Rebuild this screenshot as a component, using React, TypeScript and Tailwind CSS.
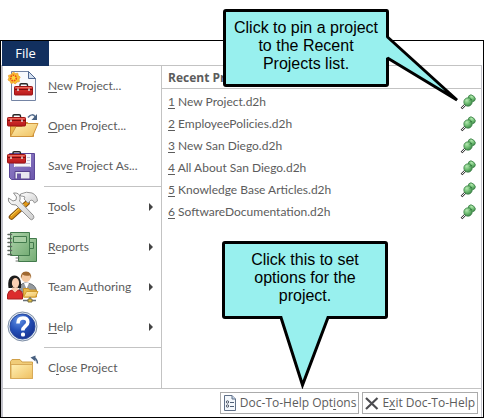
import React from 'react';

type IconProps = { className?: string };

const Toolbox = ({ x = 0, y = 0 }: { x?: number; y?: number }) => (
  <g transform={`translate(${x} ${y})`}>
    <path d="M6 3.500V2Q6 .8 7.200.8h5Q13.500.8 13.500 2v1.500" fill="none" stroke="#282828" strokeWidth="1.400" />
    <rect x="0.500" y="3.500" width="18" height="8.500" rx="0.800" fill="url(#red)" stroke="#9c1414" />
    <path d="M1 6.500h17.500" stroke="#7c0c0c" />
    <path d="M1.500 4.500h16" stroke="#ec6c5c" />
    <path d="M4 5.500v2.500M15 5.500v2.500" stroke="#e8e8e8" strokeWidth="1.400" />
  </g>
);

const Defs = () => (
  <svg className="absolute h-0 w-0" aria-hidden="true">
    <defs>
      <linearGradient id="red" x1="0" y1="0" x2="0" y2="1">
        <stop offset="0" stopColor="#dc3c34" />
        <stop offset="1" stopColor="#b8181c" />
      </linearGradient>
      <linearGradient id="gold" x1="0" y1="0" x2="1" y2="1">
        <stop offset="0" stopColor="#fff0b4" />
        <stop offset="1" stopColor="#efc060" />
      </linearGradient>
      <linearGradient id="purple" x1="0" y1="0" x2="1" y2="1">
        <stop offset="0" stopColor="#9380c8" />
        <stop offset="1" stopColor="#6c58ac" />
      </linearGradient>
      <linearGradient id="green" x1="0" y1="0" x2="1" y2="1">
        <stop offset="0" stopColor="#b0d4ac" />
        <stop offset="1" stopColor="#74ac74" />
      </linearGradient>
      <radialGradient id="blue" cx="0.350" cy="0.250" r="0.850">
        <stop offset="0" stopColor="#6090e4" />
        <stop offset="0.500" stopColor="#2450b8" />
        <stop offset="1" stopColor="#142c88" />
      </radialGradient>
      <linearGradient id="steel" x1="0" y1="0" x2="1" y2="1">
        <stop offset="0" stopColor="#ffffff" />
        <stop offset="1" stopColor="#d0d0d0" />
      </linearGradient>
      <radialGradient id="pin" cx="0.350" cy="0.300" r="0.800">
        <stop offset="0" stopColor="#b4e8b0" />
        <stop offset="0.500" stopColor="#6cbc70" />
        <stop offset="1" stopColor="#387c44" />
      </radialGradient>
    </defs>
  </svg>
);

const Icon = ({ children }: { children: React.ReactNode }) => (
  <svg viewBox="0 0 32 32" className="size-8 shrink-0" aria-hidden="true">
    {children}
  </svg>
);

const NewIcon = () => (
  <Icon>
    <path d="M4.500 1.500H21.500L28.500 8.500v22h-24z" fill="#f8fafd" stroke="#7484a4" />
    <path d="M21.500 1.500v7h7z" fill="#d4e0f0" stroke="#506890" />
    <path d="M6.500 2l1.800 1.600 2.500-.4.400 2.400 2 1.400-1.200 2 .4 2.600-2.500.4-1.600 2-1.800-1.200-2.500.6-.8-2.200-2.200-1.200 1-2.200-.6-2.400 2.400-.6z" fill="#f8c030" stroke="#f0a030" strokeWidth="0.800" />
    <circle cx="6.500" cy="8" r="2.800" fill="#fcd840" stroke="#ec4c18" strokeWidth="1.600" strokeDasharray="1.600 0.800" />
    <Toolbox x={7} y={13} />
  </Icon>
);

const OpenIcon = () => (
  <Icon>
    <path d="M3.500 26.500V12.500h17l2 2h4v12z" fill="#eab850" stroke="#c88830" />
    <path d="M3.500 26.500L9 16.500h6l3-3h13l-5.500 13z" fill="url(#gold)" stroke="#d0943c" />
    <Toolbox x={0} y={4} />
    <path d="M21 7.500q4-5 7.500-.5" fill="none" stroke="#587090" strokeWidth="1.500" />
    <path d="M30 4v6h-5.500z" fill="#486080" />
  </Icon>
);

const SaveIcon = () => (
  <Icon>
    <path d="M2.500 3.500h25v26H4.500l-2-2z" fill="url(#purple)" stroke="#5c4898" />
    <path d="M7 4h17v13H7z" fill="#f4f4f8" />
    <path d="M8 13.500h15M8 16.500h15M20 10.500h3M20 7.500h3" stroke="#c4c0d4" />
    <path d="M8 21.500h15V29H8z" fill="#e8e8f0" stroke="#56428c" />
    <path d="M10 23.500h4V29h-4z" fill="#6b56a6" />
    <Toolbox x={0} y={1} />
  </Icon>
);

const ToolsIcon = () => (
  <Icon>
    <path d="M4.500 26L20 12" stroke="#805010" strokeWidth="5.500" strokeLinecap="round" />
    <path d="M4.500 26L20 12" stroke="#e09818" strokeWidth="3.500" strokeLinecap="round" />
    <path d="M4 25L17 13" stroke="#ffdc60" strokeWidth="1" />
    <path d="M13.500 3q6-3 11.500-1 5 2 5.500 8l-3 2q-1-3-3.500-3l-3 3-4-4 1-2q-2-1-4.500-1z" fill="url(#steel)" stroke="#989898" />
    <path d="M6.500 2q6-.5 6.500 4 .5 2-.5 4l14 14.500q1 2-.5 3.500t-3 0L9 14q-5 .5-7-3-1-2-.5-4l4.500 3 3-1 .5-3z" fill="url(#steel)" stroke="#909090" />
  </Icon>
);

const ReportsIcon = () => (
  <Icon>
    <path d="M11.500 7.500h18v23h-18z" fill="url(#green)" stroke="#427a4c" />
    <path d="M18 11.500h8.500v6H18z" fill="none" stroke="#427a4c" />
    <path d="M3.500 1.500h19v23h-19z" fill="url(#green)" stroke="#427a4c" />
    <path d="M6.500 5.500h13v6h-13z" fill="#a8cea4" stroke="#427a4c" />
    <path d="M1 3.500h3.500M1 7.500h3.500M1 11.500h3.500M1 15.500h3.500M1 19.500h3.500M1 23.500h3.500" stroke="#606860" strokeWidth="1.500" strokeLinecap="round" />
    <path d="M9 27h3M9 30h3" stroke="#687068" strokeLinecap="round" />
  </Icon>
);

const TeamIcon = () => (
  <Icon>
    <path d="M12 22q0-10 6-10 9 0 11 6v3H14z" fill="#949a9e" stroke="#686e74" />
    <path d="M17 12l2.500 6 2.500-6z" fill="#fff" />
    <circle cx="19" cy="6.500" r="4.500" fill="#f4c8a0" />
    <path d="M14 8Q13 .5 19 .5q6 0 5 7.500l-1-3.500q-5 1-7.500-1z" fill="#a06830" />
    <path d="M1.500 17Q0 5 7.500 4.500q7.500.5 6.500 12.500z" fill="#1c1c1c" />
    <ellipse cx="8.500" cy="12" rx="3.600" ry="5" fill="#fad0b4" />
    <path d="M.500 28V24q.5-4.500 4.500-5l3 2 3-2q4.500.5 4.500 5v4z" fill="#dc2c2c" stroke="#a82020" />
    <path d="M5 18.500l3 3 3-3v-2H5z" fill="#fad0b4" />
    <path d="M16.500 26V17.500h5l1 1.500h7v7z" fill="#e8b848" stroke="#c89028" />
    <path d="M16.500 26l3-5.500H31L28.500 26z" fill="url(#gold)" stroke="#d09c30" />
    <path d="M23 26v3M16 29.500h13" stroke="#687078" strokeWidth="1.500" />
    <path d="M21 28h4v3h-4z" fill="#e8c040" stroke="#787040" />
  </Icon>
);

const HelpIcon = () => (
  <Icon>
    <circle cx="15.500" cy="15.500" r="14.500" fill="#e0e8f0" stroke="#7c8ca4" />
    <circle cx="15.500" cy="15.500" r="12.500" fill="url(#blue)" stroke="#2848a0" />
    <path d="M11 12.500q0-5.500 5-5.500t4.800 4.200c0 4-5 4-5 8.300" fill="none" stroke="#fff" strokeWidth="3.600" />
    <rect x="14" y="21.500" width="4" height="4" rx="1.500" fill="#fff" />
  </Icon>
);

const CloseIcon = () => (
  <Icon>
    <path d="M3.500 26.500V9.500l1.500-2h8l2 2.500h10.500v16.500z" fill="#f0cc78" stroke="#d0a048" />
    <path d="M4 12.500h21.500v14H4z" fill="url(#gold)" stroke="#d8aa58" />
    <path d="M26 6.500q4-1 4.500 5" fill="none" stroke="#486080" strokeWidth="1.500" />
    <path d="M23.500 5.500l5-2v6z" fill="#486080" />
  </Icon>
);

const PinIcon = () => (
  <svg viewBox="0 0 16 16" className="size-4" aria-hidden="true">
    <path d="M1.500 14.500l5-5" stroke="#383838" strokeWidth="2.400" />
    <path d="M2 14l4-4" stroke="#f4f4f4" />
    <ellipse cx="11.800" cy="4.200" rx="3.800" ry="2.800" transform="rotate(40 11.800 4.200)" fill="url(#pin)" stroke="#387c44" strokeWidth="0.700" />
    <path d="M6 5.500l4-2 3 3-1.500 3.500z" fill="#6cbc70" />
    <circle cx="8" cy="8" r="4.200" fill="url(#pin)" stroke="#387c44" strokeWidth="0.700" />
    <path d="M10 6.500l1.500-1.500" stroke="#2c6c38" />
  </svg>
);

const OptionsIcon = ({ className }: IconProps) => (
  <svg viewBox="1 0 14 16" className={className} aria-hidden="true">
    <path d="M2.500.5h7.500l3.500 3.500v11.500h-11z" fill="#f4f8fc" stroke="#607088" />
    <path d="M10 .5V4h3.500" fill="#c8d8ec" stroke="#607088" />
    <path d="M8 7.500h4M8 11.500h4" stroke="#506078" />
    <circle cx="5.500" cy="7" r="1.200" fill="none" stroke="#404858" strokeWidth="0.900" />
    <circle cx="5.500" cy="11" r="1.200" fill="none" stroke="#404858" strokeWidth="0.900" />
  </svg>
);

const ExitIcon = ({ className }: IconProps) => (
  <svg viewBox="1 0 14 16" className={className} aria-hidden="true">
    <path d="M2 3l11.500 11M13.500 3L2 14" stroke="#4c4c50" strokeWidth="2.200" />
  </svg>
);

/* The letter after the first "&" is the access key and is underlined. */
const Label = ({ text }: { text: string }) => {
  const at = text.indexOf('&');
  return (
    <span className="whitespace-pre">
      {text.slice(0, at)}
      <span className="underline underline-offset-2">{text[at + 1]}</span>
      {text.slice(at + 2)}
    </span>
  );
};

const groups = [
  [
    { text: '&New Project...', icon: <NewIcon />, more: false },
    { text: '&Open Project...', icon: <OpenIcon />, more: false },
    { text: 'Sav&e Project As...', icon: <SaveIcon />, more: false },
  ],
  [
    { text: '&Tools', icon: <ToolsIcon />, more: true },
    { text: '&Reports', icon: <ReportsIcon />, more: true },
    { text: 'Team A&uthoring', icon: <TeamIcon />, more: true },
    { text: '&Help', icon: <HelpIcon />, more: true },
  ],
  [{ text: 'C&lose Project', icon: <CloseIcon />, more: false }],
];

const recent = [
  '&1 New Project.d2h',
  '&2 EmployeePolicies.d2h',
  '&3 New San Diego.d2h',
  '&4 All About San Diego.d2h',
  '&5 Knowledge Base Articles.d2h',
  '&6 SoftwareDocumentation.d2h',
];

export default function App() {
  return (
    <div className="bg-white pt-10 font-['Lato','Noto_Sans',sans-serif] text-xs text-[#5c5c5c]">
      <Defs />
      <div className="relative border border-black pr-px">
        <div className="flex h-6 pl-px">
          <button className="h-[25px] w-[47px] bg-[#12305f] font-['Open_Sans','Noto_Sans',sans-serif] text-[13px] text-white">File</button>
        </div>
        <div className="border-r border-l-2 border-[#c3c3cb]">
          <div className="flex border-y border-[#c3c3c3]">
            <nav className="w-[159px] shrink-0 border-r border-[#c3c3c3]">
              {groups.map((items, g) => (
                <div key={g}>
                  {g > 0 && <div className="ml-[41px] h-px bg-[#c3c3c3]" />}
                  {items.map((item) => (
                    <button key={item.text} className="flex h-10 w-full items-center gap-[9px] pr-2 pl-1 text-left">
                      {item.icon}
                      <Label text={item.text} />
                      {item.more && (
                        <svg viewBox="0 0 4 8" className="ml-auto h-2 w-1 shrink-0" aria-hidden="true">
                          <path d="M0 0l4 4-4 4z" fill="#444" />
                        </svg>
                      )}
                    </button>
                  ))}
                </div>
              ))}
            </nav>
            <section className="min-w-0 grow">
              <h2 className="h-[23px] border-b border-[#c3c3c3] pl-1.5 font-['Open_Sans','Noto_Sans',sans-serif] leading-6 font-bold">Recent Projects</h2>
              <ul className="pt-0.5">
                {recent.map((text) => (
                  <li key={text} className="flex h-[22px] items-center justify-between pr-[5px] pl-1.5">
                    <button>
                      <Label text={text} />
                    </button>
                    <button aria-label="Pin project">
                      <PinIcon />
                    </button>
                  </li>
                ))}
              </ul>
            </section>
          </div>
          <footer className="flex justify-end gap-[3px] p-[3px] font-['Open_Sans','Noto_Sans',sans-serif]">
            <button className="flex h-[22px] items-center gap-[3px] border border-[#ababab] px-0.5">
              <OptionsIcon className="h-4 w-3.5" />
              <Label text="Doc-To-Help Opt&ions" />
            </button>
            <button className="flex h-[22px] items-center gap-[3px] border border-[#ababab] px-0.5">
              <ExitIcon className="h-4 w-3.5" />
              <Label text="E&xit Doc-To-Help" />
            </button>
          </footer>
        </div>

        <div className="absolute -top-8 right-[94px] h-[78px] w-[166px] font-['Liberation_Sans',Arial,sans-serif] text-base text-black">
          <svg viewBox="0 0 236 94" className="absolute top-0 left-0 h-[94px] w-[236px]" aria-hidden="true">
            <path d="M3 1.500H163.500Q164.500 1.500 164.500 3V28L234 91 164.500 49V75Q164.500 76.500 163 76.500H3Q1.500 76.500 1.500 75V3Q1.500 1.500 3 1.500z" fill="#98f0ee" stroke="#000" strokeWidth="3" strokeLinejoin="bevel" />
          </svg>
          <p className="relative px-2 pt-2.5 text-center leading-[18px]">Click to pin a project to the Recent Projects list.</p>
        </div>

        <div className="absolute right-[95px] bottom-[98px] h-[78px] w-[166px] font-['Liberation_Sans',Arial,sans-serif] text-base text-black">
          <svg viewBox="0 0 166 148" className="absolute top-0 left-0 h-[148px] w-[166px]" aria-hidden="true">
            <path d="M3 1.500H163Q164.500 1.500 164.500 3V75Q164.500 76.500 163 76.500H106L80.500 144 59 76.500H3Q1.500 76.500 1.500 75V3Q1.500 1.500 3 1.500z" fill="#98f0ee" stroke="#000" strokeWidth="3" />
          </svg>
          <p className="relative px-5 pt-2.5 text-center leading-[18px]">Click this to set options for the project.</p>
        </div>
      </div>
    </div>
  );
}
